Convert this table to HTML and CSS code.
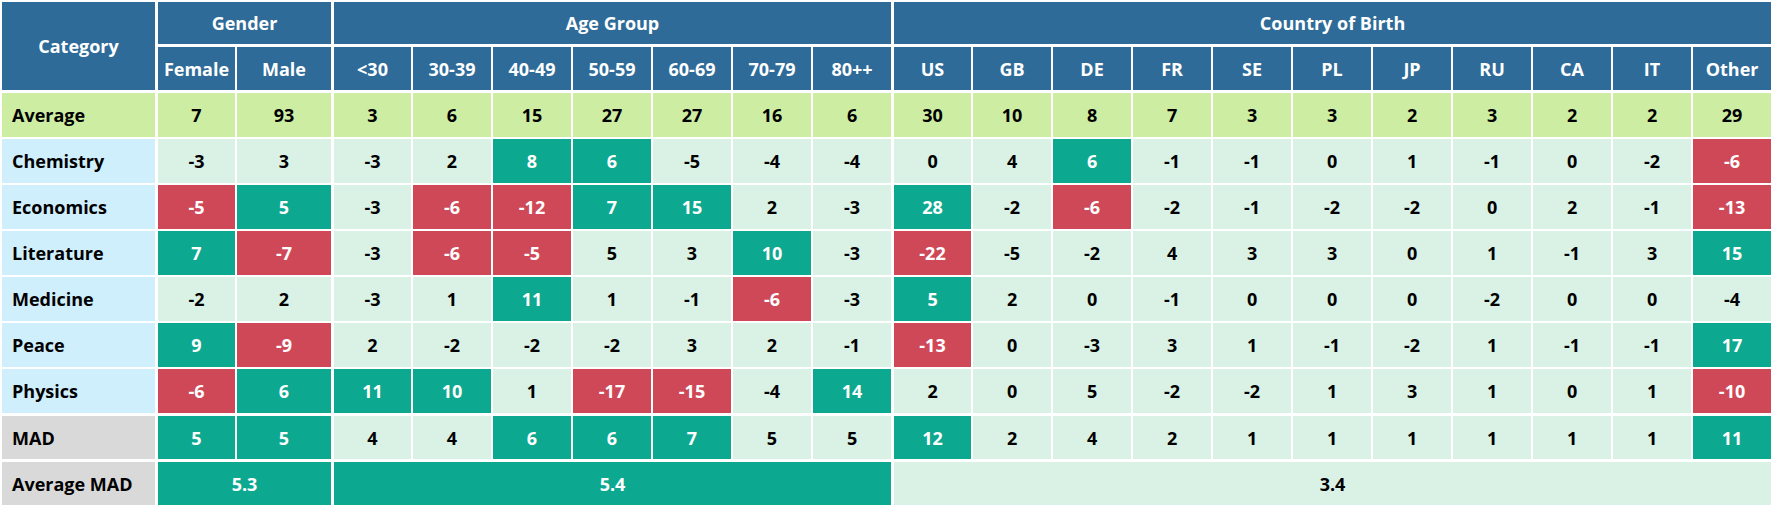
FILE: index.html
```html
<!DOCTYPE html>
<html>
<head>
<meta charset="utf-8">
<link rel="stylesheet" href="styles.css">
</head>
<body>
<table class="tbl">
<colgroup>
<col class="c-cat"><col class="c-d"><col class="c-male">
<col class="c-d"><col class="c-d"><col class="c-d"><col class="c-d"><col class="c-d"><col class="c-d"><col class="c-d">
<col class="c-d"><col class="c-d"><col class="c-d"><col class="c-d"><col class="c-d"><col class="c-d"><col class="c-d"><col class="c-d"><col class="c-d"><col class="c-d"><col class="c-d">
</colgroup>
<thead>
<tr class="h1">
<th class="hd" rowspan="2">Category</th>
<th class="hd gs" colspan="2">Gender</th>
<th class="hd gs" colspan="7">Age Group</th>
<th class="hd gs" colspan="11">Country of Birth</th>
</tr>
<tr class="h2">
<th class="hd gs">Female</th><th class="hd">Male</th>
<th class="hd gs">&lt;30</th><th class="hd">30-39</th><th class="hd">40-49</th><th class="hd">50-59</th><th class="hd">60-69</th><th class="hd">70-79</th><th class="hd">80++</th>
<th class="hd gs">US</th><th class="hd">GB</th><th class="hd">DE</th><th class="hd">FR</th><th class="hd">SE</th><th class="hd">PL</th><th class="hd">JP</th><th class="hd">RU</th><th class="hd">CA</th><th class="hd">IT</th><th class="hd">Other</th>
</tr>
</thead>
<tbody>
<tr class="avg-row">
<td class="lbl avg">Average</td>
<td class="avg gs">7</td><td class="avg">93</td>
<td class="avg gs">3</td><td class="avg">6</td><td class="avg">15</td><td class="avg">27</td><td class="avg">27</td><td class="avg">16</td><td class="avg">6</td>
<td class="avg gs">30</td><td class="avg">10</td><td class="avg">8</td><td class="avg">7</td><td class="avg">3</td><td class="avg">3</td><td class="avg">2</td><td class="avg">3</td><td class="avg">2</td><td class="avg">2</td><td class="avg">29</td>
</tr>
<tr class="row">
<td class="lbl cat">Chemistry</td>
<td class="n gs">-3</td><td class="n">3</td>
<td class="n gs">-3</td><td class="n">2</td><td class="g">8</td><td class="g">6</td><td class="n">-5</td><td class="n">-4</td><td class="n">-4</td>
<td class="n gs">0</td><td class="n">4</td><td class="g">6</td><td class="n">-1</td><td class="n">-1</td><td class="n">0</td><td class="n">1</td><td class="n">-1</td><td class="n">0</td><td class="n">-2</td><td class="r">-6</td>
</tr>
<tr class="row">
<td class="lbl cat">Economics</td>
<td class="r gs">-5</td><td class="g">5</td>
<td class="n gs">-3</td><td class="r">-6</td><td class="r">-12</td><td class="g">7</td><td class="g">15</td><td class="n">2</td><td class="n">-3</td>
<td class="g gs">28</td><td class="n">-2</td><td class="r">-6</td><td class="n">-2</td><td class="n">-1</td><td class="n">-2</td><td class="n">-2</td><td class="n">0</td><td class="n">2</td><td class="n">-1</td><td class="r">-13</td>
</tr>
<tr class="row">
<td class="lbl cat">Literature</td>
<td class="g gs">7</td><td class="r">-7</td>
<td class="n gs">-3</td><td class="r">-6</td><td class="r">-5</td><td class="n">5</td><td class="n">3</td><td class="g">10</td><td class="n">-3</td>
<td class="r gs">-22</td><td class="n">-5</td><td class="n">-2</td><td class="n">4</td><td class="n">3</td><td class="n">3</td><td class="n">0</td><td class="n">1</td><td class="n">-1</td><td class="n">3</td><td class="g">15</td>
</tr>
<tr class="row">
<td class="lbl cat">Medicine</td>
<td class="n gs">-2</td><td class="n">2</td>
<td class="n gs">-3</td><td class="n">1</td><td class="g">11</td><td class="n">1</td><td class="n">-1</td><td class="r">-6</td><td class="n">-3</td>
<td class="g gs">5</td><td class="n">2</td><td class="n">0</td><td class="n">-1</td><td class="n">0</td><td class="n">0</td><td class="n">0</td><td class="n">-2</td><td class="n">0</td><td class="n">0</td><td class="n">-4</td>
</tr>
<tr class="row">
<td class="lbl cat">Peace</td>
<td class="g gs">9</td><td class="r">-9</td>
<td class="n gs">2</td><td class="n">-2</td><td class="n">-2</td><td class="n">-2</td><td class="n">3</td><td class="n">2</td><td class="n">-1</td>
<td class="r gs">-13</td><td class="n">0</td><td class="n">-3</td><td class="n">3</td><td class="n">1</td><td class="n">-1</td><td class="n">-2</td><td class="n">1</td><td class="n">-1</td><td class="n">-1</td><td class="g">17</td>
</tr>
<tr class="row">
<td class="lbl cat">Physics</td>
<td class="r gs">-6</td><td class="g">6</td>
<td class="g gs">11</td><td class="g">10</td><td class="n">1</td><td class="r">-17</td><td class="r">-15</td><td class="n">-4</td><td class="g">14</td>
<td class="n gs">2</td><td class="n">0</td><td class="n">5</td><td class="n">-2</td><td class="n">-2</td><td class="n">1</td><td class="n">3</td><td class="n">1</td><td class="n">0</td><td class="n">1</td><td class="r">-10</td>
</tr>
<tr class="mad-row">
<td class="lbl grey">MAD</td>
<td class="g gs">5</td><td class="g">5</td>
<td class="n gs">4</td><td class="n">4</td><td class="g">6</td><td class="g">6</td><td class="g">7</td><td class="n">5</td><td class="n">5</td>
<td class="g gs">12</td><td class="n">2</td><td class="n">4</td><td class="n">2</td><td class="n">1</td><td class="n">1</td><td class="n">1</td><td class="n">1</td><td class="n">1</td><td class="n">1</td><td class="g">11</td>
</tr>
<tr class="mad-row">
<td class="lbl grey">Average MAD</td>
<td class="g gs" colspan="2">5.3</td>
<td class="g gs" colspan="7">5.4</td>
<td class="n gs" colspan="11">3.4</td>
</tr>
</tbody>
</table>
</body>
</html>
```

FILE: styles.css
```css
html, body {
  margin: 0;
  padding: 0;
  background: #ffffff;
}

.tbl {
  table-layout: fixed;
  width: 1773px;
  border-collapse: separate;
  border-spacing: 2px;
  font-family: "Open Sans", "Noto Sans", sans-serif;
  font-weight: 700;
  font-size: 18px;
  line-height: 22px;
  color: #000000;
}

.c-cat { width: 153px; }
.c-d { width: 78px; }
.c-male { width: 94px; }

.tbl th,
.tbl td {
  box-sizing: border-box;
  padding: 0;
  text-align: center;
  vertical-align: middle;
  white-space: nowrap;
  overflow: hidden;
}

.h1 th { height: 42px; }
.h2 th { height: 44px; border-top: 1px solid #ffffff; }
.avg-row td { height: 45px; border-top: 1px solid #ffffff; }
.row td { height: 44px; }
.mad-row td { height: 44px; border-top: 1px solid #ffffff; }

.tbl .gs { border-left: 1px solid #ffffff; }

.hd {
  background: #2e6b98;
  color: #ffffff;
}

.tbl .lbl {
  text-align: left;
  padding-left: 10px;
}

.avg { background: #cdeda3; }
.cat { background: #cfeffd; }
.grey { background: #d9d9d9; }
.n { background: #d9f2e5; }
.g { background: #0ca890; color: #ffffff; }
.r { background: #cf4857; color: #ffffff; }
```
